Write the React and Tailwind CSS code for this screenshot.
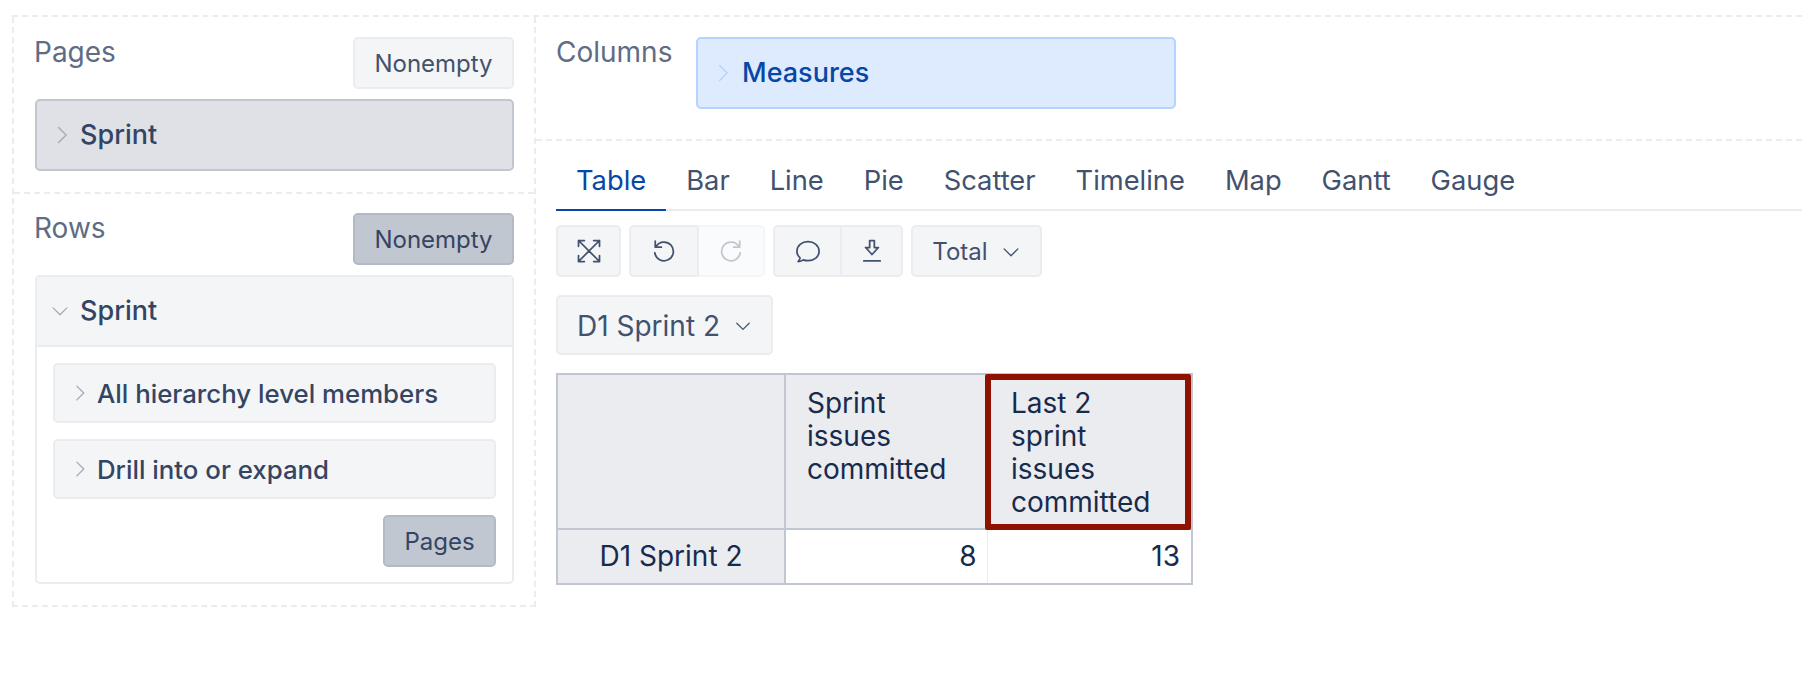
const Chevron = ({ dir = 'right', className = '' }) => (
  <svg viewBox="0 0 16 16" fill="none" stroke="currentColor" strokeWidth="1.1" strokeLinecap="round" strokeLinejoin="round" className={`shrink-0 ${className}`}>
    {dir === 'right' ? <path d="M5.5 2.5 11 8l-5.5 5.500" /> : <path d="M2.500 5.500 8 11l5.500-5.500" />}
  </svg>
);

const ToolIcon = ({ children, className = '' }) => (
  <svg viewBox="0 0 24 24" fill="none" stroke="currentColor" strokeWidth="1.5" strokeLinecap="round" strokeLinejoin="round" className={`w-7 h-7 ${className}`}>
    {children}
  </svg>
);

const tabs = ['Table', 'Bar', 'Line', 'Pie', 'Scatter', 'Timeline', 'Map', 'Gantt', 'Gauge'];

const Button = ({ active, className = '', children }) => (
  <button className={`rounded-[5px] border-2 pt-[2px] text-[24px] text-[#42526e] ${active ? 'bg-[#c1c7d0] border-[#b3bac5] text-[#344563]' : 'bg-[#f4f5f7] border-[#ebecf0]'} ${className}`}>
    {children}
  </button>
);

const Member = ({ label }) => (
  <div className="h-[60px] flex items-center rounded-[5px] bg-[#f4f5f7] border-2 border-[#ebecf0] pl-[15px] text-[25.800px] font-medium text-[#344563]">
    <Chevron className="w-[20px] h-[20px] text-[#a5adba] mr-[7px]" />
    <span className="pt-[2px]">{label}</span>
  </div>
);

const App = () => {
  return (
    <div className="min-h-[674px] bg-white pt-[15px] pl-[12px] overflow-hidden font-['Inter',sans-serif]">
      <div className="flex border-t-2 border-dashed border-[#ebecf0]">
        {/* Left panels */}
        <div className="w-[524px] h-[590px] shrink-0 border-x-2 border-b-2 border-dashed border-[#ebecf0]">
          <div className="h-[175px] pl-[21px] pr-[20px] pt-[20px]">
            <div className="flex justify-between items-start mb-[10px]">
              <span className="text-[28px] leading-[32px] -mt-[1px] -ml-[1px] text-[#5e6c84]">Pages</span>
              <Button className="w-[161px] h-[52px]">Nonempty</Button>
            </div>
            <div className="h-[72px] flex items-center rounded-[5px] bg-[#dfe1e6] border-2 border-[#c1c7d0] pl-[14px] text-[27px] font-medium text-[#344563]">
              <Chevron className="w-[22px] h-[22px] text-[#a5adba] mr-[7px]" />
              Sprint
            </div>
          </div>
          <div className="border-t-2 border-dashed border-[#ebecf0] pl-[21px] pr-[20px] pt-[19px]">
            <div className="flex justify-between items-start mb-[10px]">
              <span className="text-[28px] leading-[32px] -mt-[1px] -ml-[1px] text-[#5e6c84]">Rows</span>
              <Button active className="w-[161px] h-[52px]">Nonempty</Button>
            </div>
            <div className="h-[309px] rounded-[5px] border-2 border-[#ebecf0]">
              <div className="h-[70px] flex items-center bg-[#f4f5f7] border-b-2 border-[#ebecf0] pl-[13px] text-[27px] font-medium text-[#344563]">
                <Chevron dir="down" className="w-[20px] h-[20px] text-[#a5adba] mr-[10px]" />
                Sprint
              </div>
              <div className="flex flex-col gap-[16px] px-[16px] pt-[16px]">
                <Member label="All hierarchy level members" />
                <Member label="Drill into or expand" />
              </div>
              <div className="flex justify-end pr-[16px] pt-[16px]">
                <Button active className="w-[113px] h-[52px]">Pages</Button>
              </div>
            </div>
          </div>
        </div>

        {/* Right side */}
        <div className="flex-1 min-w-0">
          <div className="h-[124px] flex items-start pl-[20px] pt-[20px] border-b-2 border-dashed border-[#ebecf0]">
            <span className="text-[28px] leading-[32px] -mt-[1px] w-[140px] text-[#5e6c84]">Columns</span>
            <div className="w-[480px] h-[72px] flex items-center rounded-[5px] bg-[#deebff] border-2 border-[#b3d4ff] pl-[14px] text-[27px] font-medium text-[#0747a6]">
              <Chevron className="w-[22px] h-[22px] text-[#b3d4ff] mr-[8px]" />
              Measures
            </div>
          </div>

          <div className="pl-[20px]">
            <div className="flex h-[70px] items-stretch border-b-2 border-[#ebecf0]">
              {tabs.map((tab, i) => (
                <div key={tab} className={`px-[20px] pt-[24px] text-[27.300px] leading-[32px] -mb-[2px] ${i === 0 ? 'text-[#0747a6] border-b-2 border-[#0747a6]' : 'text-[#42526e]'}`}>
                  {tab}
                </div>
              ))}
            </div>

            <div className="flex gap-[8px] mt-[14px]">
              <Button className="w-[65px] h-[52px] !pt-0 flex items-center justify-center">
                <ToolIcon>
                  <path d="M3 8V3h5M21 8V3h-5M3 16v5h5M21 16v5h-5M3 3l18 18M21 3 3 21" />
                </ToolIcon>
              </Button>
              <div className="flex">
                <Button className="w-[68px] h-[52px] !pt-0 rounded-r-none border-r-0 flex items-center justify-center">
                  <ToolIcon>
                    <path d="M5 8.500a8 8 0 1 1-.9 5" />
                    <path d="M4.500 3.500v5.200h5.200" />
                  </ToolIcon>
                </Button>
                <button className="w-[68px] h-[52px] rounded-r-[5px] border-l-2 border-l-[#ebecf0] bg-[#fafbfc] border-2 border-[#f4f5f7] flex items-center justify-center text-[#c1c7d0]">
                  <ToolIcon>
                    <path d="M19 8.500a8 8 0 1 0 .9 5" />
                    <path d="M19.500 3.500v5.200h-5.200" />
                  </ToolIcon>
                </button>
              </div>
              <div className="flex">
                <Button className="w-[67px] h-[52px] !pt-0 rounded-r-none border-r-0 flex items-center justify-center">
                  <ToolIcon>
                    <path d="M3.500 21c1.700.1 3.200-.4 4.500-1.400 1.200.5 2.500.7 4 .7 5.200 0 9.500-3.300 9.500-8.100S17.200 4 12 4 2.500 7.400 2.500 12.200c0 2.300 1 4.300 2.700 5.700-.2 1.200-.8 2.200-1.700 3.100z" />
                  </ToolIcon>
                </Button>
                <Button className="w-[63px] h-[52px] !pt-0 rounded-l-none border-l-2 flex items-center justify-center">
                  <ToolIcon>
                    <path d="M10 3h4v6h3.500L12 15 6.500 9H10zM5 20.500h14" />
                  </ToolIcon>
                </Button>
              </div>
              <Button className="w-[131px] h-[52px] flex items-center justify-center">
                Total
                <Chevron dir="down" className="w-[20px] h-[20px] ml-[13px]" />
              </Button>
            </div>

            <Button className="w-[217px] h-[60px] mt-[18px] text-[28px] flex items-center justify-center">
              D1 Sprint 2
              <Chevron dir="down" className="w-[18px] h-[18px] ml-[14px]" />
            </Button>

            <table className="mt-[18px] border-collapse border-2 border-[#c1c7d0] text-[#172b4d] text-[28px] leading-[33px] table-fixed w-[635px]">
              <colgroup>
                <col className="w-[228px]" />
                <col className="w-[202px]" />
                <col className="w-[205px]" />
              </colgroup>
              <tbody>
                <tr className="h-[155px]">
                  <th className="bg-[#ebecf0] border-2 border-[#c1c7d0]"></th>
                  <th className="bg-[#ebecf0] border-2 border-[#c1c7d0] font-normal text-left align-top pl-[21px] pr-[26px] pt-[12px]">
                    Sprint issues committed
                  </th>
                  <th className="relative bg-[#ebecf0] border-2 border-[#c1c7d0] font-normal text-left align-top pl-[23px] pr-[26px] pt-[12px]">
                    Last 2 sprint issues committed
                    <div className="absolute -left-[3px] -top-[1px] right-0 -bottom-[2px] border-[6px] border-[#8f1200] rounded-[2px]"></div>
                  </th>
                </tr>
                <tr className="h-[55px]">
                  <th className="bg-[#ebecf0] border-2 border-[#c1c7d0] font-normal text-center">D1 Sprint 2</th>
                  <td className="border border-[#ebecf0] border-l-2 border-l-[#c1c7d0] text-right pr-[10px]">8</td>
                  <td className="border border-[#ebecf0] text-right pr-[11px]">13</td>
                </tr>
              </tbody>
            </table>
          </div>
        </div>
      </div>
    </div>
  );
};

export default App;
